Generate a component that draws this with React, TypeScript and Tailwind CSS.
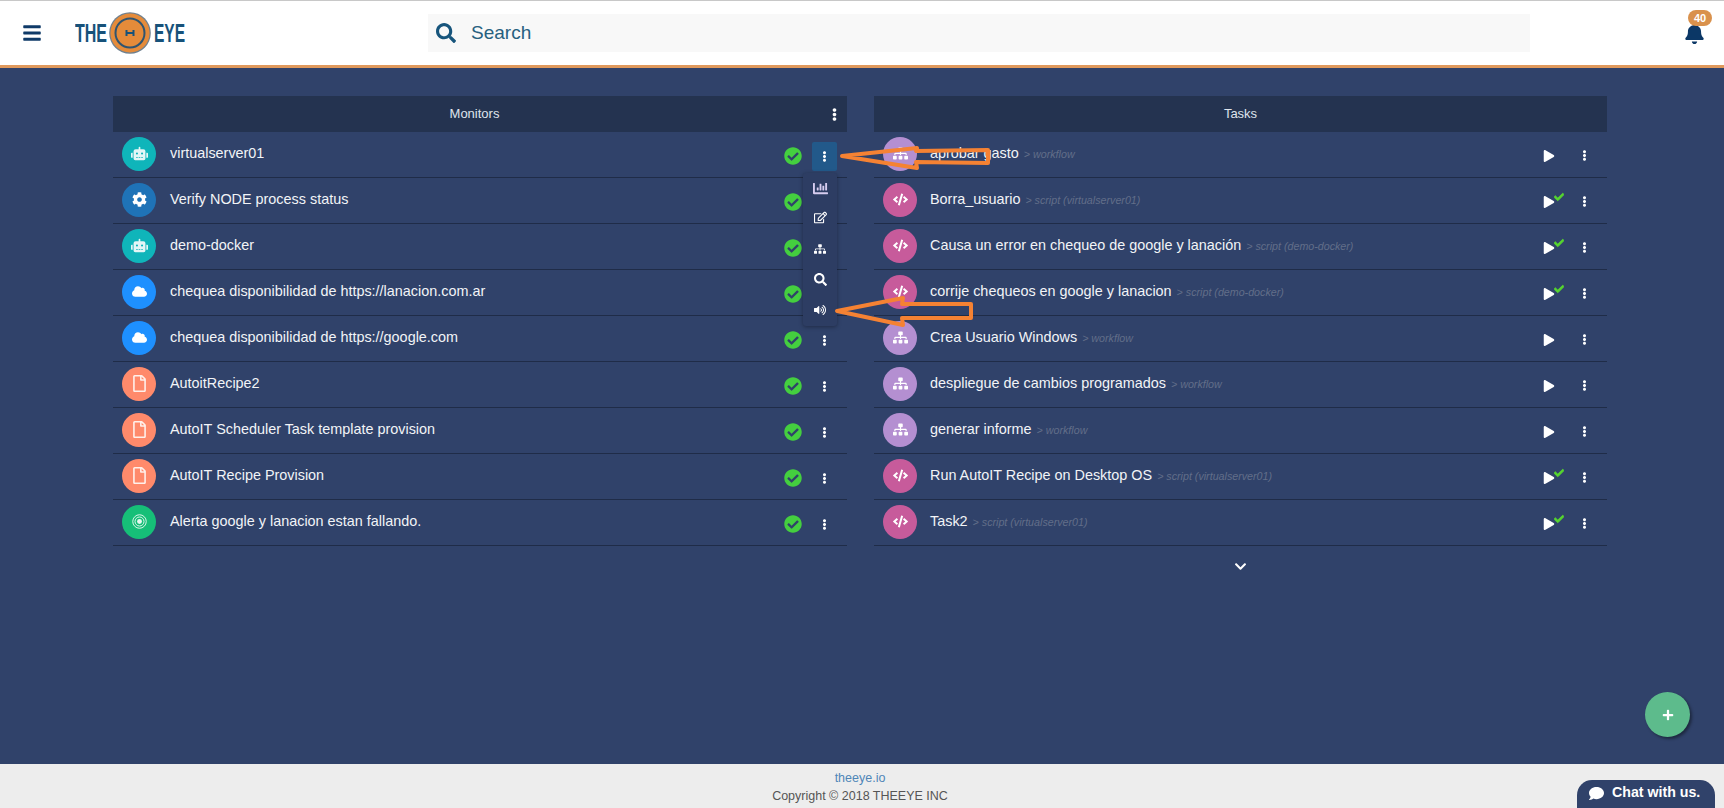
import React from "react";
import {
  FaBars,
  FaBell,
  FaChartBar,
  FaCheck,
  FaCheckCircle,
  FaChevronDown,
  FaCloud,
  FaCode,
  FaCog,
  FaComment,
  FaEllipsisV,
  FaPlay,
  FaPlus,
  FaRegEdit,
  FaRegFile,
  FaRobot,
  FaSearch,
  FaSitemap,
  FaVolumeUp,
} from "react-icons/fa";

type IconKind = "robot" | "cog" | "cloud" | "file" | "target" | "flow" | "code";

const iconStyles: Record<IconKind, string> = {
  robot: "bg-[#0fb5ba]",
  cog: "bg-[#1f73b7]",
  cloud: "bg-[#1e90ff]",
  file: "bg-[#ff8a6b]",
  target: "bg-[#16bf78]",
  flow: "bg-[#b48fd1]",
  code: "bg-[#c75b9b]",
};

const monitors: { name: string; icon: IconKind }[] = [
  { name: "virtualserver01", icon: "robot" },
  { name: "Verify NODE process status", icon: "cog" },
  { name: "demo-docker", icon: "robot" },
  { name: "chequea disponibilidad de https://lanacion.com.ar", icon: "cloud" },
  { name: "chequea disponibilidad de https://google.com", icon: "cloud" },
  { name: "AutoitRecipe2", icon: "file" },
  { name: "AutoIT Scheduler Task template provision", icon: "file" },
  { name: "AutoIT Recipe Provision", icon: "file" },
  { name: "Alerta google y lanacion estan fallando.", icon: "target" },
];

const tasks: { name: string; meta: string; icon: IconKind }[] = [
  { name: "aprobar gasto", meta: "> workflow", icon: "flow" },
  { name: "Borra_usuario", meta: "> script (virtualserver01)", icon: "code" },
  { name: "Causa un error en chequeo de google y lanación", meta: "> script (demo-docker)", icon: "code" },
  { name: "corrije chequeos en google y lanacion", meta: "> script (demo-docker)", icon: "code" },
  { name: "Crea Usuario Windows", meta: "> workflow", icon: "flow" },
  { name: "despliegue de cambios programados", meta: "> workflow", icon: "flow" },
  { name: "generar informe", meta: "> workflow", icon: "flow" },
  { name: "Run AutoIT Recipe on Desktop OS", meta: "> script (virtualserver01)", icon: "code" },
  { name: "Task2", meta: "> script (virtualserver01)", icon: "code" },
];

function TargetIcon() {
  return (
    <svg width="15" height="15" viewBox="0 0 16 16" fill="none" stroke="#e8f8f0">
      <circle cx="8" cy="8" r="7.2" strokeWidth="1" />
      <circle cx="8" cy="8" r="4.8" strokeWidth="1" />
      <circle cx="8" cy="8" r="2.6" fill="#e8f8f0" strokeWidth="0" />
    </svg>
  );
}

function RowIcon({ kind }: { kind: IconKind }) {
  return (
    <div className={`mb-[2px] flex h-[34px] w-[34px] shrink-0 items-center justify-center rounded-full text-white ${iconStyles[kind]}`}>
      {kind === "robot" && <FaRobot size={17} className="text-[#e4f6f6]" />}
      {kind === "cog" && <FaCog size={15} />}
      {kind === "cloud" && <FaCloud size={15} />}
      {kind === "file" && <FaRegFile size={17} className="text-[#fff0ea]" />}
      {kind === "target" && <TargetIcon />}
      {kind === "flow" && <FaSitemap size={15} />}
      {kind === "code" && <FaCode size={15} />}
    </div>
  );
}

function Logo() {
  return (
    <div className="ml-[33px] flex h-[42px] w-[110px] items-center text-[#17527a]">
      <span className="w-[34px] origin-left scale-x-[0.64] text-[25px] leading-none font-bold">THE</span>
      <svg width="42" height="42" viewBox="0 0 42 42" className="shrink-0">
        <circle cx="21" cy="21" r="20.8" fill="#6f8190" />
        <circle cx="21" cy="21" r="19.6" fill="#e58b3a" />
        <circle cx="21" cy="21" r="14.5" fill="#e58b3a" stroke="#2f5470" strokeWidth="2" />
        <path d="M17.5 18v6M24.5 18v6M17.5 21h7" stroke="#17527a" strokeWidth="2" fill="none" />
      </svg>
      <span className="ml-[3px] w-[31px] origin-left scale-x-[0.62] text-[25px] leading-none font-bold">EYE</span>
    </div>
  );
}

function Header() {
  return (
    <header className="flex h-[68px] shrink-0 items-center border-t border-t-[#c8c8c8] border-b-[3px] border-b-[#e0995c] bg-white">
      <FaBars className="ml-[22px] text-[#0f3a68]" size={20} />
      <Logo />
      <div className="ml-[243px] flex h-[38px] w-[1102px] items-center bg-[#f8f8f8] pl-[8px]">
        <FaSearch size={20} className="text-[#17557c]" />
        <span className="ml-[15px] text-[19px] text-[#27607f]">Search</span>
      </div>
      <div className="relative ml-[154px] mt-[1px] text-[#0b3766]">
        <FaBell size={21} />
        <span className="absolute -top-[13px] left-[4px] flex h-[16px] w-[24px] items-center justify-center rounded-full bg-[#d9914c] text-[11px] font-bold text-white">
          40
        </span>
      </div>
    </header>
  );
}

function PanelTitle({ title, menu }: { title: string; menu?: boolean }) {
  return (
    <div className={`relative flex h-[36px] items-center justify-center bg-[#243350] text-[13px] text-[#dfe4ec] ${menu ? "pr-[11px]" : ""}`}>
      {title}
      {menu && <FaEllipsisV size={13} className="absolute right-[6px] text-white" />}
    </div>
  );
}

function Row({ children }: { children: React.ReactNode }) {
  return <div className="flex h-[46px] items-center border-b border-[#1f2c48] pl-[9px]">{children}</div>;
}

function Monitors() {
  return (
    <section className="w-[734px]">
      <PanelTitle title="Monitors" menu />
      {monitors.map((m, i) => (
        <Row key={m.name}>
          <RowIcon kind={m.icon} />
          <span className="ml-[14px] mb-[2px] flex-1 text-[14.4px] text-[#f2f4f7]">{m.name}</span>
          <FaCheckCircle size={18} className="mt-[2px] text-[#44cf3f]" />
          <div className={`ml-[10px] mr-[10px] mt-[3px] flex h-[29px] w-[25px] items-center justify-center rounded-[2px] text-white ${i === 0 ? "bg-[#22598a]" : ""}`}>
            <FaEllipsisV size={11} />
          </div>
        </Row>
      ))}
    </section>
  );
}

function Tasks() {
  return (
    <section className="ml-[27px] w-[733px]">
      <PanelTitle title="Tasks" />
      {tasks.map((t) => (
        <Row key={t.name}>
          <RowIcon kind={t.icon} />
          <span className="ml-[13px] mb-[2px] text-[14.4px] text-[#f2f4f7]">{t.name}</span>
          <span className="ml-[5px] flex-1 text-[10.7px] italic text-[#626e89]">{t.meta}</span>
          <div className="relative mr-[22px] mt-[2px] w-[15px] pl-[1px] text-white">
            <FaPlay size={12} />
            {t.icon === "code" && (
              <FaCheck size={10} stroke="currentColor" strokeWidth={40} className="absolute -top-[4px] left-[12px] text-[#57d62f]" />
            )}
          </div>
          <FaEllipsisV size={11} className="mr-[17px] mt-[2px] text-white" />
        </Row>
      ))}
      <div className="mt-[14px] flex justify-center text-white">
        <FaChevronDown size={13} />
      </div>
    </section>
  );
}

function RowMenu() {
  return (
    <div className="absolute left-[803px] top-[173px] flex h-[153px] w-[34px] flex-col items-center rounded-[3px] bg-[#2d3d63] pt-[8px] text-white shadow-[0_1px_4px_rgba(0,0,0,0.35)]">
      <FaChartBar size={15} className="text-[#d7cdf0]" />
      <FaRegEdit size={13} className="mt-[15px]" />
      <FaSitemap size={12} className="mt-[19px]" />
      <FaSearch size={13} className="mt-[18px]" />
      <FaVolumeUp size={12} className="mt-[18px]" />
    </div>
  );
}

// hand-drawn annotation arrows on top of the screenshot
function Arrows() {
  return (
    <svg className="pointer-events-none absolute left-0 top-0" width="1724" height="808" fill="none" stroke="#f58233" strokeWidth="4" strokeLinejoin="round">
      <path d="M842 156 L917 148 L916 151 L988 150 L988 163 L916 162 L917 168 Z" />
      <path d="M837 311 L903 298 L902 304 L971 304 L971 318 L902 318 L903 325 Z" />
    </svg>
  );
}

export default function App() {
  return (
    <div className="relative flex h-screen flex-col overflow-hidden bg-[#30426a] font-['Liberation_Sans',Arial,sans-serif]">
      <Header />
      <main className="flex flex-1 pl-[113px] pt-[28px]">
        <Monitors />
        <Tasks />
      </main>
      <footer className="flex h-[44px] shrink-0 flex-col items-center bg-[#ededed] pr-[4px] pt-[5px] text-[12.5px] leading-[18px]">
        <span className="text-[#4f86b8]">theeye.io</span>
        <span className="text-[#555555]">Copyright © 2018 THEEYE INC</span>
      </footer>
      <RowMenu />
      <Arrows />
      <button className="absolute left-[1645px] top-[692px] flex h-[45px] w-[45px] items-center justify-center rounded-full bg-[#5dbb8c] text-white shadow-[2px_2px_3px_rgba(0,0,0,0.4)]">
        <FaPlus size={12} />
      </button>
      <div className="absolute bottom-0 left-[1577px] flex h-[28px] w-[138px] items-center rounded-t-[15px] bg-[#30426a] pl-[12px] pb-[2px] text-[14.2px] font-bold text-white">
        <FaComment size={15} />
        <span className="ml-[8px]">Chat with us.</span>
      </div>
    </div>
  );
}
